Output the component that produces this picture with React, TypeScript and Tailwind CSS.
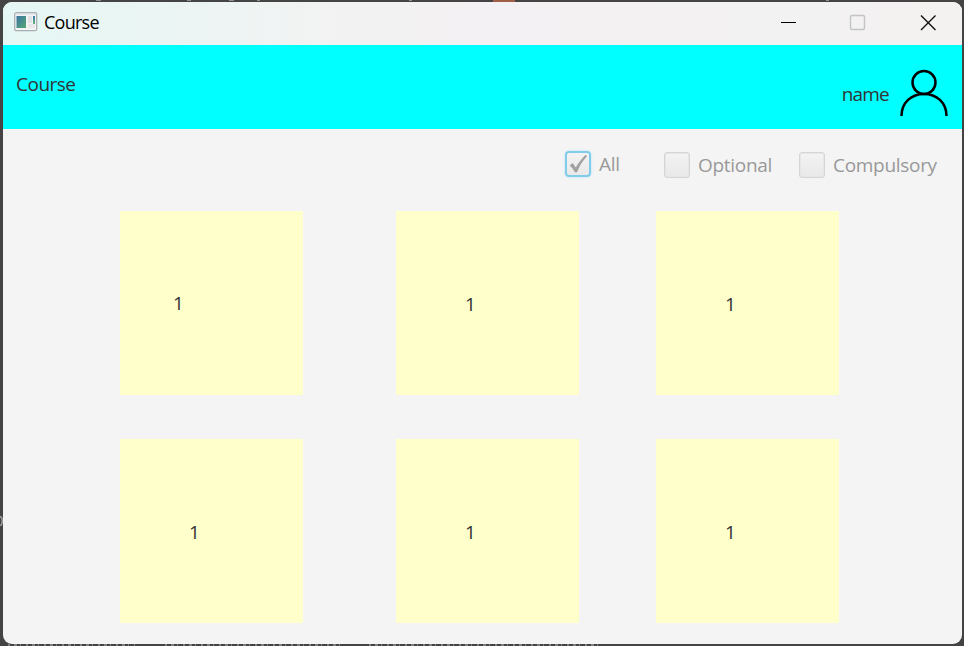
import type { ReactNode } from 'react';

const textFont = "font-['Open_Sans','Noto_Sans',sans-serif] whitespace-nowrap";

function AppIcon() {
  return (
    <svg width="24" height="20" viewBox="0 0 24 20" className="shrink-0">
      <defs>
        <linearGradient id="pane" x1="0" y1="0" x2="1" y2="1">
          <stop offset="0" stopColor="#3c74a6" />
          <stop offset="1" stopColor="#55a873" />
        </linearGradient>
        <linearGradient id="side" x1="0" y1="0" x2="0" y2="1">
          <stop offset="0" stopColor="#3c74a6" />
          <stop offset="1" stopColor="#62b67e" />
        </linearGradient>
      </defs>
      <rect x="0.7" y="0.7" width="22" height="18" rx="1.5" fill="#f4f4f4" stroke="#a9adb4" strokeWidth="1.3" />
      <path d="M1.5 2h20.5" stroke="#d4d6db" strokeWidth="1" />
      <rect x="2.5" y="4" width="9.5" height="12" fill="url(#pane)" />
      <rect x="14" y="4" width="4" height="7" fill="#e2e2e4" />
      <rect x="14" y="12" width="7" height="4" fill="#e8e8e9" />
      <rect x="19" y="4" width="2" height="8" fill="url(#side)" />
    </svg>
  );
}

function TitleBar() {
  return (
    <div className="flex h-[43px] bg-[linear-gradient(90deg,#e5f7f4_0%,#ebf5f4_17%,#f3f2f2_36%,#f3f1f3_50%,#f3f2f1_100%)] pl-[11px]">
      <div className="pt-[10px]"><AppIcon /></div>
      <div className={`${textFont} ml-[6px] pt-[7px] text-[18px] leading-[26px] tracking-[-0.75px] text-black`}>Course</div>
      <svg width="190" height="43" viewBox="-30 0 190 43" className="ml-auto" fill="none">
        <path d="M-21 20.5H-6" stroke="#000" />
        <rect x="48.5" y="13.5" width="14" height="14" rx="1.5" stroke="#c4c4c4" strokeWidth="1.4" />
        <path d="M119 13.5l14.5 14.5M133.5 13.5L119 28" stroke="#111" strokeWidth="1.4" />
      </svg>
    </div>
  );
}

function Header() {
  return (
    <div className="flex h-[84px] bg-[#00ffff] pl-[13px] pr-[13px]">
      <div className={`${textFont} pt-[26px] text-[19px] leading-[26px] tracking-[-0.5px] text-[#333333]`}>Course</div>
      <div className={`${textFont} ml-auto mr-[10px] pt-[36px] text-[19px] leading-[26px] tracking-[-0.8px] text-[#333333]`}>name</div>
      <svg width="50" height="84" viewBox="0 0 50 84" fill="none" stroke="#000" strokeWidth="2.5">
        <circle cx="25" cy="37.5" r="11.5" />
        <path d="M2.5 71C2.5 57.5 12.5 49 25 49S47.5 57.5 47.5 71" />
      </svg>
    </div>
  );
}

function Check({ checked = false, className, children }: { checked?: boolean; className: string; children: ReactNode }) {
  return (
    <div className={`flex items-start ${className}`}>
      {checked ? (
        <span className="h-[26px] w-[26px] rounded-[4px] border-2 border-[#7fcde8] bg-gradient-to-b from-[#f3f3f3] to-[#e9e9e9] shadow-[0_0_2px_1px_#d8edf5]">
          <svg width="22" height="22" viewBox="0 0 22 22">
            <path d="M2.8 12.5L5.6 10L8.8 14.5C11.5 10 15 5.2 18.8 1.8L20 3.3C15.5 8 12.2 13.5 10 19.2H7.8C6.4 16.5 4.8 14.3 2.8 12.5Z" fill="#a1a1a1" />
          </svg>
        </span>
      ) : (
        <span className="h-[26px] w-[26px] rounded-[3px] border border-[#d5d5d5] bg-gradient-to-b from-[#f3f3f3] to-[#e9e9e9] shadow-[inset_0_0_0_1px_#e6e6e6]" />
      )}
      <span className={`${textFont} ml-[8px] text-[19px] leading-[26px] tracking-[-0.3px] text-[#999999]`}>{children}</span>
    </div>
  );
}

function Card({ className }: { className: string }) {
  return (
    <div className={`h-[183.5px] w-[183px] bg-[#ffffcc] ${className}`}>
      <span className={`${textFont} block text-[19px] leading-[26px] text-[#333333]`}>1</span>
    </div>
  );
}

export default function App() {
  return (
    <div className="relative h-[646px] w-[964px] overflow-hidden bg-[#444444] pl-[3px] pr-[2px] pt-[2px]">
      <div className="absolute left-[493px] top-0 h-[2px] w-[22px] bg-[#a06047]" />
      <svg className="absolute left-0 top-0" width="964" height="646" fill="none">
        <path d="M96 .5h5M187 .5h4M229 .5h5M257 .5h3M409 .5h3M826 .5h3" stroke="#909090" />
        <path d="M8 645H135M165 645H340M369 645H602" stroke="#7d8179" strokeWidth="2" strokeDasharray="2 4 3 3 1 5" />
        <path d="M0 516.5C3 517 3 525 0 525.5" stroke="#a0a0a0" strokeWidth="1.5" />
      </svg>
      <div className="relative flex h-[642px] w-[959px] flex-col overflow-hidden rounded-[9px] bg-[#f4f4f4]">
        <TitleBar />
        <Header />
        <div className="flex h-[82px] pl-[562px] pt-[22px]">
          <Check checked className="w-[99px]">All</Check>
          <Check className="w-[135px] pt-px">Optional</Check>
          <Check className="pt-px">Compulsory</Check>
        </div>
        <div className="grid grid-cols-[276px_260px_183px] gap-y-[44.5px] pl-[117px]">
          <Card className="pl-[53px] pt-[79px]" />
          <Card className="pl-[69px] pt-[80px]" />
          <Card className="pl-[69px] pt-[80px]" />
          <Card className="pl-[69px] pt-[80px]" />
          <Card className="pl-[69px] pt-[80px]" />
          <Card className="pl-[69px] pt-[80px]" />
        </div>
      </div>
    </div>
  );
}
